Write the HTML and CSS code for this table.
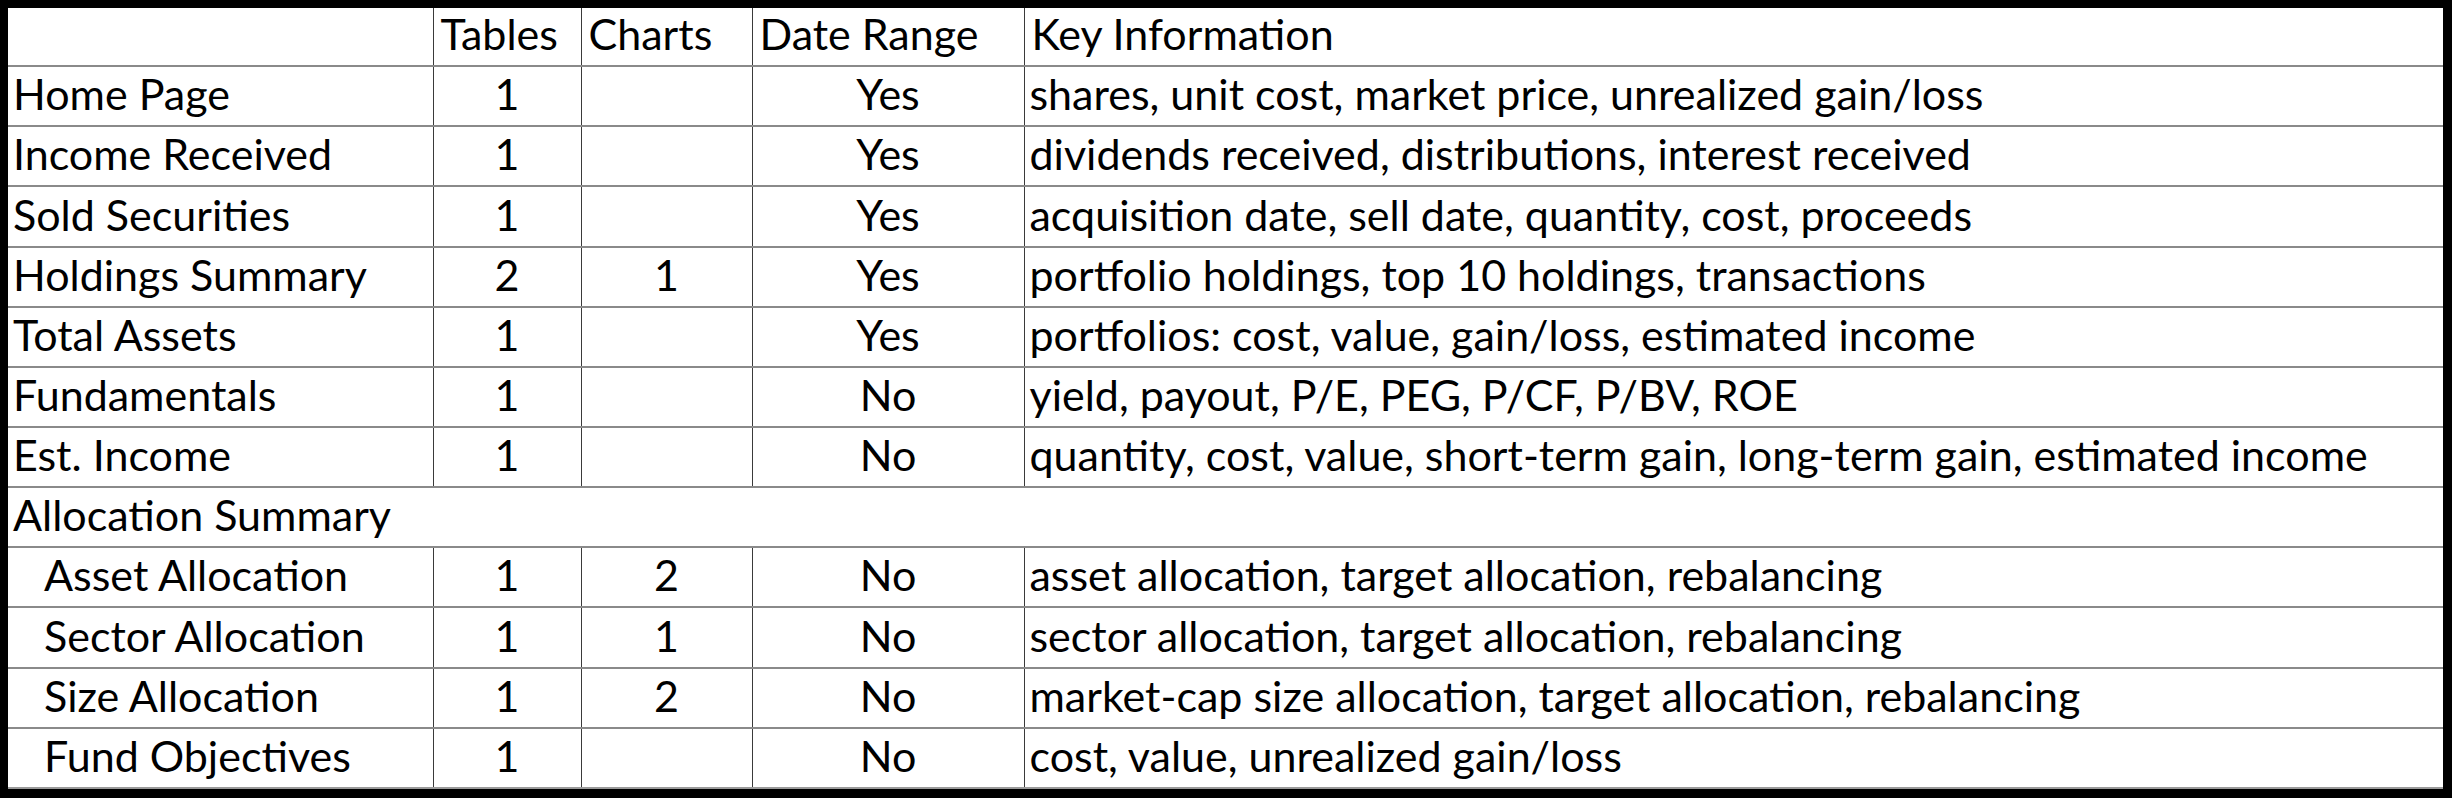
FILE: index.html
```html
<!DOCTYPE html>
<html>
<head>
<meta charset="utf-8">
<link rel="stylesheet" href="styles.css">
</head>
<body>
<div class="frame">
<table class="grid">
  <colgroup>
    <col class="c-name"><col class="c-tables"><col class="c-charts"><col class="c-date"><col class="c-info">
  </colgroup>
  <tr class="head">
    <td></td><td>Tables</td><td>Charts</td><td>Date Range</td><td>Key Information</td>
  </tr>
  <tr><td class="name">Home Page</td><td class="num">1</td><td class="num"></td><td class="num">Yes</td><td class="info">shares, unit cost, market price, unrealized gain/loss</td></tr>
  <tr><td class="name">Income Received</td><td class="num">1</td><td class="num"></td><td class="num">Yes</td><td class="info">dividends received, distributions, interest received</td></tr>
  <tr><td class="name">Sold Securities</td><td class="num">1</td><td class="num"></td><td class="num">Yes</td><td class="info">acquisition date, sell date, quantity, cost, proceeds</td></tr>
  <tr><td class="name">Holdings Summary</td><td class="num">2</td><td class="num">1</td><td class="num">Yes</td><td class="info">portfolio holdings, top 10 holdings, transactions</td></tr>
  <tr><td class="name">Total Assets</td><td class="num">1</td><td class="num"></td><td class="num">Yes</td><td class="info">portfolios: cost, value, gain/loss, estimated income</td></tr>
  <tr><td class="name">Fundamentals</td><td class="num">1</td><td class="num"></td><td class="num">No</td><td class="info">yield, payout, P/E, PEG, P/CF, P/BV, ROE</td></tr>
  <tr><td class="name">Est. Income</td><td class="num">1</td><td class="num"></td><td class="num">No</td><td class="info">quantity, cost, value, short-term gain, long-term gain, estimated income</td></tr>
  <tr><td class="name group" colspan="5">Allocation Summary</td></tr>
  <tr><td class="name sub">Asset Allocation</td><td class="num">1</td><td class="num">2</td><td class="num">No</td><td class="info">asset allocation, target allocation, rebalancing</td></tr>
  <tr><td class="name sub">Sector Allocation</td><td class="num">1</td><td class="num">1</td><td class="num">No</td><td class="info">sector allocation, target allocation, rebalancing</td></tr>
  <tr><td class="name sub">Size Allocation</td><td class="num">1</td><td class="num">2</td><td class="num">No</td><td class="info">market-cap size allocation, target allocation, rebalancing</td></tr>
  <tr class="last"><td class="name sub">Fund Objectives</td><td class="num">1</td><td class="num"></td><td class="num">No</td><td class="info">cost, value, unrealized gain/loss</td></tr>
</table>
</div>
</body>
</html>
```
FILE: styles.css
```css
html, body {
  margin: 0;
  padding: 0;
  background: #000;
}
.frame {
  width: 2452px;
  height: 798px;
  box-sizing: border-box;
  background: #000;
  padding: 8px 9px 9px 8px;
  overflow: hidden;
}
.grid {
  width: 2435px;
  height: 781px;
  border-collapse: collapse;
  table-layout: fixed;
  background: #fff;
  font-family: "Lato", "Liberation Sans", sans-serif;
  font-size: 43px;
  color: #000;
}
.c-name { width: 425px; }
.c-tables { width: 148px; }
.c-charts { width: 171px; }
.c-date { width: 272px; }
.c-info { width: 1419px; }
.grid td {
  padding: 0 8px 7px 5px;
  vertical-align: bottom;
  line-height: 48px;
  white-space: nowrap;
  overflow: hidden;
  border-left: 1px solid #3a3a3a;
  border-bottom: 2px solid #8a8a8a;
  height: 58px;
  box-sizing: border-box;
}
.grid td:first-child { border-left: none; }
.grid tr.head td { height: 56px; padding-left: 7px; }
.grid tr.last td { border-bottom: 2px solid #9a9a9a; }
.grid td.num { text-align: center; padding-left: 0; padding-right: 0; }
.grid td.sub { padding-left: 36px; }
```
